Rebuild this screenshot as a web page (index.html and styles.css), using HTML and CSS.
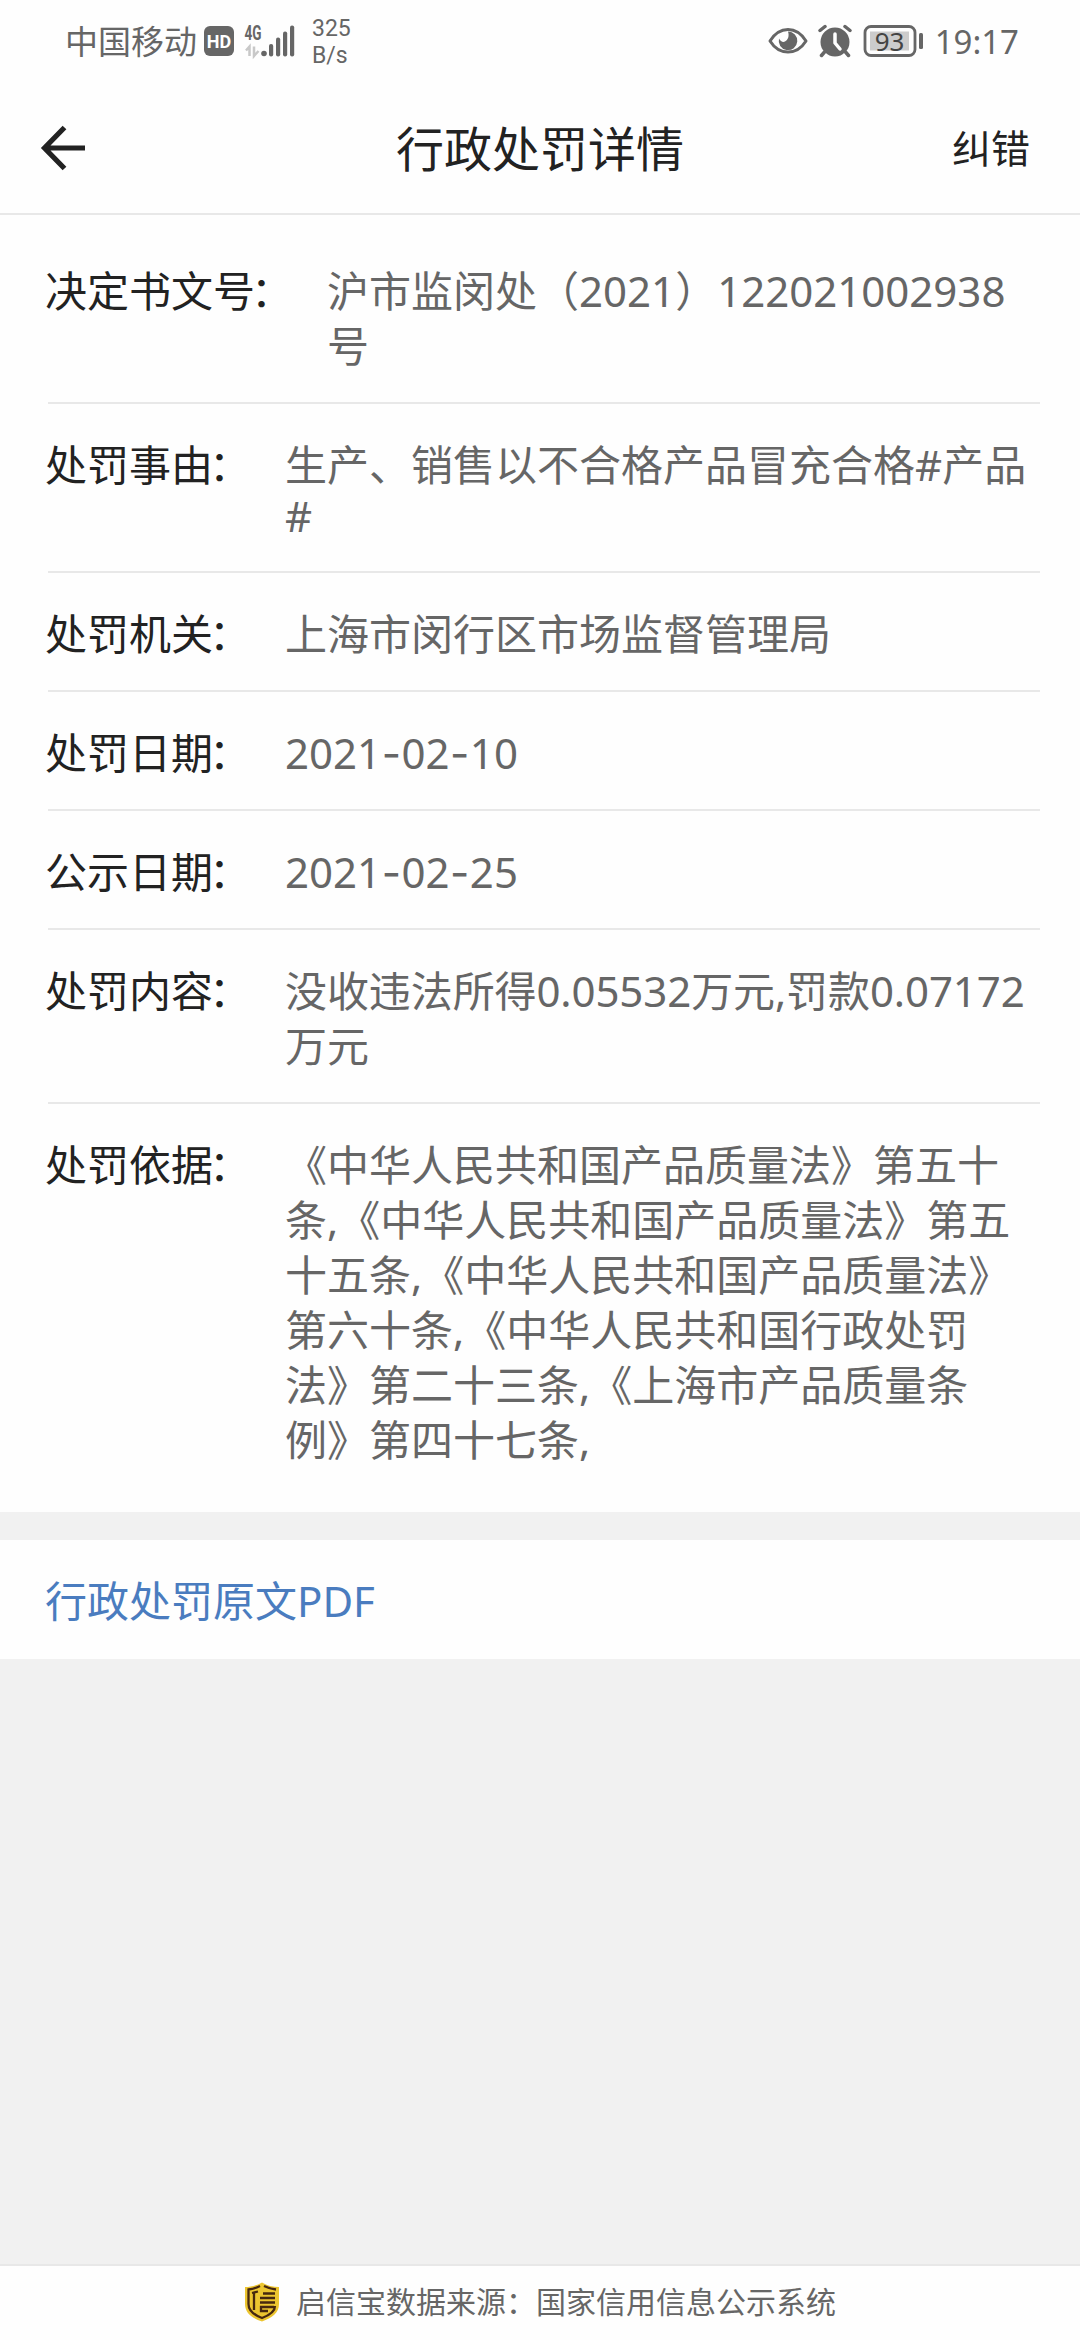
FILE: index.html
```html
<!DOCTYPE html>
<html lang="zh-CN">
<head>
  <meta charset="UTF-8">
  <meta name="viewport" content="width=device-width, initial-scale=1.0">
  <title>行政处罚详情</title>
  <link rel="stylesheet" href="styles.css">
</head>
<body>
  <div class="status-bar">
    <span class="carrier">中国移动</span>
    <span class="hd">HD</span>
    <div class="network">
      <svg width="51" height="46" viewBox="0 -6 51 46">
        <text x="0.5" y="16" class="network-type" textLength="17" lengthAdjust="spacingAndGlyphs">4G</text>
        <path d="M5.5 32V22.5L2 26.5M10 22.5V32L14.5 27" fill="none" stroke="#c8c8c8" stroke-width="2.5"/>
        <g fill="#666">
          <circle cx="20" cy="29.5" r="2.8"/>
          <rect x="25" y="20" width="4.2" height="12.5" rx="2"/>
          <rect x="32" y="13.5" width="4.2" height="19" rx="2"/>
          <rect x="39" y="7.5" width="4.2" height="25" rx="2"/>
          <rect x="46" y="1.5" width="4.2" height="31" rx="2"/>
        </g>
      </svg>
    </div>
    <div class="speed">
      <span>325</span>
      <span>B/s</span>
    </div>
    <div class="status-right">
      <svg width="40" height="32" viewBox="0 0 40 32">
        <path d="M2 16C7 8 13 4.5 20 4.5S33 8 38 16C33 24 27 27 20 27S7 24 2 16Z" fill="none" stroke="#666" stroke-width="3" stroke-linejoin="round"/>
        <path d="M20 6.5A9.3 9.3 0 1 1 11 13.5C12.5 16.5 15 17.5 17 16.5C20 15 21.5 11 20 6.5Z" fill="#666"/>
      </svg>
      <svg class="alarm" width="34" height="34" viewBox="0 0 34 34">
        <circle cx="17" cy="18" r="14.5" fill="#666"/>
        <path d="M2 6.5L7 2.5M32 6.5L27 2.5M6.5 28L3 32M27.5 28L31 32" fill="none" stroke="#fff" stroke-width="6.5"/>
        <circle cx="17" cy="18" r="13.5" fill="#666"/>
        <path d="M2 6.5L7 2.5M32 6.5L27 2.5M6.5 28L3.500 31.500M27.5 28L30.500 31.500" fill="none" stroke="#666" stroke-width="3.5" stroke-linecap="round"/>
        <path d="M17 10V19L22 25" fill="none" stroke="#fff" stroke-width="3.5" stroke-linecap="round" stroke-linejoin="round"/>
      </svg>
      <svg class="battery" width="60" height="34" viewBox="0 0 60 34">
        <rect x="2" y="2.5" width="50" height="29" rx="6" fill="none" stroke="#666" stroke-width="2.8"/>
        <rect x="7" y="7.5" width="39" height="19" fill="#ccc"/>
        <rect x="56" y="9" width="4" height="16" rx="1.5" fill="#666"/>
        <text x="26.5" y="26.5" text-anchor="middle" class="battery-level">93</text>
      </svg>
      <span class="clock">19:17</span>
    </div>
  </div>

  <header class="nav-bar">
    <a class="back">
      <svg width="46" height="46" viewBox="0 0 46 46" fill="none" stroke="#222" stroke-width="5.2">
        <path d="M24.5 2.5L4.500 23L24.5 43.5M5 23H45"/>
      </svg>
    </a>
    <h1>行政处罚详情</h1>
    <a class="report">纠错</a>
  </header>

  <main class="detail">
    <div class="row">
      <div class="label">决定书文号<span class="colon">：</span></div>
      <div class="value">沪市监闵处（2021）122021002938<br>号</div>
    </div>
    <div class="row reason">
      <div class="label">处罚事由<span class="colon">：</span></div>
      <div class="value">生产、销售以不合格产品冒充合格#产品<br>#</div>
    </div>
    <div class="row">
      <div class="label">处罚机关<span class="colon">：</span></div>
      <div class="value">上海市闵行区市场监督管理局</div>
    </div>
    <div class="row">
      <div class="label">处罚日期<span class="colon">：</span></div>
      <div class="value">2021<span class="dash">-</span>02<span class="dash">-</span>10</div>
    </div>
    <div class="row">
      <div class="label">公示日期<span class="colon">：</span></div>
      <div class="value">2021<span class="dash">-</span>02<span class="dash">-</span>25</div>
    </div>
    <div class="row">
      <div class="label">处罚内容<span class="colon">：</span></div>
      <div class="value amount">没收违法所得0.05532万元,罚款0.07172<br>万元</div>
    </div>
    <div class="row last">
      <div class="label">处罚依据<span class="colon">：</span></div>
      <div class="value">《中华人民共和国产品质量法》第五十<br>条,《中华人民共和国产品质量法》第五<br>十五条,《中华人民共和国产品质量法》<br>第六十条,《中华人民共和国行政处罚<br>法》第二十三条,《上海市产品质量条<br>例》第四十七条,</div>
    </div>
  </main>

  <a class="pdf-link">行政处罚原文PDF</a>

  <footer class="source">
    <svg width="36" height="40" viewBox="0 0 36 40">
      <path d="M18 0.5C23 3.5 29 5 35 5V22C35 31 28 36 18 39.5C8 36 1 31 1 22V5C7 5 13 3.5 18 0.5Z" fill="#ecc530"/>
      <path d="M16 4C12 6 8 7 4.5 7.5V22C4.5 29 10 33 18 36C26 33 31 29 31 24M20 4C24 6 28 7 32 7.5" fill="none" stroke="#46280f" stroke-width="2.3"/>
      <path d="M10 10V28M8 11L14 9.5M19 11.5H31M16 16H31M16 20.5H31M30 25H17V29H24" fill="none" stroke="#46280f" stroke-width="2.3"/>
    </svg>
    <span>启信宝数据来源：国家信用信息公示系统</span>
  </footer>
</body>
</html>
```
FILE: styles.css
```css
* {
  box-sizing: border-box;
}

body {
  margin: 0;
  width: 1080px;
  height: 2340px;
  display: flex;
  flex-direction: column;
  overflow: hidden;
  background-color: #f1f1f1;
  color: #222;
  font-family: "Noto Sans", "Noto Sans CJK SC", sans-serif;
  font-size: 42px;
  text-spacing-trim: space-all;
}

svg {
  display: block;
  flex-shrink: 0;
}

/* Status bar */
.status-bar {
  display: flex;
  align-items: center;
  height: 82px;
  padding: 0 61px 0 65px;
  background-color: #fefefe;
  color: #666;
}

.carrier {
  width: 132px;
  padding-top: 1px;
  font-size: 33px;
  line-height: 48px;
  white-space: nowrap;
}

.hd {
  width: 30px;
  height: 30px;
  margin-left: 7px;
  border-radius: 6px;
  background-color: #666;
  color: #fff;
  font-family: Roboto, sans-serif;
  font-size: 18px;
  font-weight: 700;
  line-height: 31px;
  text-align: center;
}

.network {
  margin-left: 10px;
}

.network-type {
  fill: #666;
  font-family: Roboto, sans-serif;
  font-size: 20px;
  font-weight: 700;
}

.speed {
  display: flex;
  flex-direction: column;
  margin-left: 17px;
  padding-top: 2px;
  font-family: Roboto, sans-serif;
  font-size: 23px;
  line-height: 27px;
}

.status-right {
  display: flex;
  align-items: center;
  margin-left: auto;
}

.alarm {
  margin-left: 10px;
}

.battery {
  margin-left: 11px;
}

.battery-level {
  fill: #444;
  font-size: 26px;
}

.clock {
  margin-left: 12px;
  padding-top: 1px;
  font-size: 33px;
  line-height: 46px;
}

/* Navigation bar */
.nav-bar {
  display: grid;
  grid-template-columns: 1fr auto 1fr;
  align-items: center;
  height: 133px;
  padding: 0 50px 0 50px;
  border-bottom: 2px solid #e8e8e8;
  background-color: #fefefe;
}

.back {
  margin-left: -10px;
}

.nav-bar h1 {
  margin: 0;
  padding-top: 2px;
  font-size: 48px;
  font-weight: 400;
  line-height: 66px;
}

.report {
  justify-self: end;
  font-size: 39px;
  line-height: 60px;
}

/* Penalty details */
.detail {
  height: 1297px;
  padding: 15px 40px 0 48px;
  background-color: #fefefe;
}

.row {
  display: flex;
  gap: 30px;
  padding: 33px 0 29px;
  border-bottom: 2px solid #e8e8e8;
  line-height: 55px;
  white-space: nowrap;
}

.row.last {
  border-bottom: none;
}

.row.reason {
  height: 169px;
}

.row.reason .value {
  padding-top: 2px;
  line-height: 51px;
}

.label {
  margin-left: -3px;
}

.colon {
  margin-left: -4px;
  margin-right: 4px;
}

.value {
  color: #666;
}

.value.amount {
  letter-spacing: -0.1px;
}

.dash {
  margin: 0 0.5px;
  font-family: Inter, sans-serif;
  line-height: 0;
}

.pdf-link {
  height: 119px;
  margin-top: 28px;
  padding: 2px 0 0 45px;
  background-color: #fefefe;
  color: #4a7cbf;
  line-height: 117px;
}

/* Data source */
.source {
  display: flex;
  align-items: center;
  justify-content: center;
  gap: 16px;
  height: 76px;
  margin-top: auto;
  padding: 0 0 2px;
  border-top: 2px solid #e8e8e8;
  background-color: #fefefe;
  color: #666;
  font-size: 30px;
  line-height: 42px;
}
```
